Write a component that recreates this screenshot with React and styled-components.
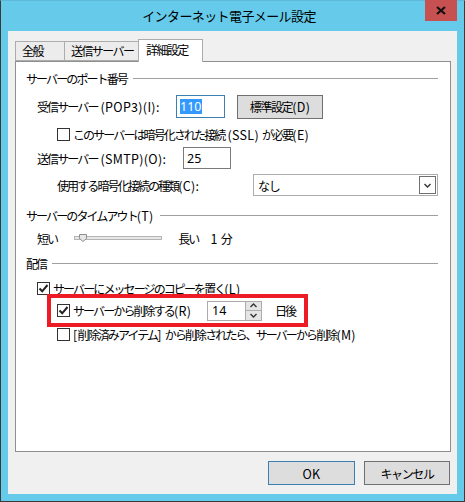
import React from "react";
import styled, { createGlobalStyle } from "styled-components";

const GlobalStyle = createGlobalStyle`
  html, body {
    margin: 0;
    padding: 0;
  }
  body {
    font-family: "Noto Sans CJK JP", "Noto Sans", sans-serif;
    font-size: 12px;
    color: #000;
  }
  * {
    box-sizing: border-box;
  }
`;

const Window = styled.div`
  width: 465px;
  height: 502px;
  border: 1px solid #3a3a3a;
  border-top-color: #5fb8d6;
  background: #66cbea;
  padding: 0 7px 7px 7px;
  display: flex;
  flex-direction: column;
`;

const TitleBar = styled.div`
  height: 30px;
  display: grid;
  grid-template-columns: 1fr auto 1fr;
  margin: 0 -7px 0 -7px;
  padding-right: 7px;
`;

const Title = styled.div`
  grid-column: 2;
  font-size: 13px;
  letter-spacing: -0.6px;
  line-height: 30px;
`;

const CloseButton = styled.div`
  grid-column: 3;
  justify-self: end;
  width: 32px;
  height: 21px;
  background: #c75050;
  display: flex;
  align-items: center;
  justify-content: center;
  margin-top: -1px;
`;

const Client = styled.div`
  flex: 1;
  background: #f0f0f0;
  padding: 8px 6px 9px 7px;
  display: flex;
  flex-direction: column;
`;

const TabRow = styled.div`
  display: flex;
  align-items: flex-end;
  height: 22px;
  position: relative;
  z-index: 1;
`;

const Tab = styled.div`
  height: ${(p) => (p.$active ? "23px" : "20px")};
  padding-left: ${(p) => (p.$active ? "7px" : "6px")};
  margin-bottom: ${(p) => (p.$active ? "-1px" : "0")};
  margin-left: -1px;
  border: 1px solid #acacac;
  border-bottom: ${(p) => (p.$active ? "none" : "1px solid #acacac")};
  background: ${(p) => (p.$active ? "#fff" : "#ececec")};
  letter-spacing: -1.6px;
  line-height: ${(p) => (p.$active ? "20px" : "18px")};
  white-space: nowrap;
  width: ${(p) => p.$w}px;
  &:first-child {
    margin-left: 0;
  }
`;

const Panel = styled.div`
  flex: 1;
  background: #fff;
  border: 1px solid #8e8f8f;
  padding: 8px 12px 0 10px;
  display: flex;
  flex-direction: column;
`;

const GroupHead = styled.div`
  display: flex;
  align-items: center;
  height: 16px;
  margin-top: ${(p) => p.$mt || 0}px;
  letter-spacing: -1.9px;
  white-space: nowrap;
  &::after {
    content: "";
    flex: 1;
    height: 1px;
    background: #a0a0a0;
    margin-left: 6px;
  }
`;

const Row = styled.div`
  display: flex;
  align-items: center;
  height: ${(p) => p.$h || 13}px;
  margin-top: ${(p) => p.$mt || 0}px;
  padding-left: ${(p) => p.$indent || 0}px;
  white-space: nowrap;
`;

const Label = styled.span`
  letter-spacing: -1.9px;
  width: ${(p) => (p.$w ? p.$w + "px" : "auto")};
  margin-left: ${(p) => p.$ml || 0}px;
  flex-shrink: 0;
`;

const Lt = styled.span`
  font-size: 12.5px;
  letter-spacing: 0.3px;
`;

const TextBox = styled.div`
  width: ${(p) => p.$w}px;
  height: ${(p) => p.$h || 23}px;
  border: 1px solid ${(p) => (p.$focus ? "#3c7fb1" : "#7a7a7a")};
  background: #fff;
  display: flex;
  align-items: center;
  padding-left: 3px;
  font-family: "Noto Sans", sans-serif;
  font-size: 12.5px;
`;

const Selected = styled.span`
  background: #3399ff;
  color: #fff;
  line-height: 15px;
  padding-right: 1px;
`;

const PushButton = styled.div`
  width: ${(p) => p.$w}px;
  height: ${(p) => p.$h || 24}px;
  background: #dddddd;
  border: 1px solid ${(p) => (p.$default ? "#3c7fb1" : "#707070")};
  display: flex;
  align-items: center;
  justify-content: center;
  letter-spacing: -1.4px;
  margin-left: ${(p) => p.$ml || 0}px;
  white-space: nowrap;
`;

const Select = styled.div`
  width: 185px;
  height: 22px;
  border: 1px solid #acacac;
  background: #fff;
  display: flex;
  align-items: center;
  justify-content: space-between;
  padding: 0 1px 0 4px;
  letter-spacing: -1.2px;
`;

const DropBtn = styled.div`
  width: 17px;
  height: 18px;
  border: 1px solid #707070;
  display: flex;
  align-items: center;
  justify-content: center;
`;

const Check = styled.div`
  width: 13px;
  height: 13px;
  border: 1px solid #333;
  background: #fff;
  flex-shrink: 0;
  display: flex;
  align-items: center;
  justify-content: center;
  margin-right: 3px;
`;

const Track = styled.div`
  width: 88px;
  height: 4px;
  border: 1px solid #b5b5b5;
  background: #e7e7e7;
  margin: 0 16px 0 17px;
  position: relative;
`;

const Thumb = styled.svg`
  position: absolute;
  left: 4px;
  top: -3px;
`;

const Highlight = styled.div`
  width: 261px;
  height: 33px;
  border: 4px solid #ed1c24;
  margin: -1px 0 0 21px;
  padding-left: 6px;
  display: flex;
  align-items: center;
  white-space: nowrap;
`;

const Spin = styled.div`
  display: flex;
  margin-left: 17px;
  margin-right: 13px;
`;

const SpinField = styled.div`
  width: 38px;
  height: 20px;
  border: 1px solid #acacac;
  border-right: none;
  display: flex;
  align-items: center;
  padding-left: 4px;
  font-family: "Noto Sans", sans-serif;
  font-size: 12.5px;
`;

const SpinButtons = styled.div`
  width: 17px;
  height: 20px;
  border: 1px solid #acacac;
  display: flex;
  flex-direction: column;
`;

const SpinHalf = styled.div`
  flex: 1;
  background: #e5e5e5;
  display: flex;
  align-items: center;
  justify-content: center;
  & + & {
    border-top: 1px solid #acacac;
  }
`;

const Footer = styled.div`
  display: flex;
  justify-content: flex-end;
  padding-top: 9px;
  padding-right: 1px;
`;

const CheckMark = () => (
  <svg width="11" height="11" viewBox="0 0 11 11">
    <path d="M1.5 5.5 L4.2 8.3 L9.5 2" fill="none" stroke="#222" strokeWidth="2" />
  </svg>
);

const CheckBox = ({ checked }) => <Check>{checked && <CheckMark />}</Check>;

const Chevron = ({ up }) => (
  <svg width="7" height="5" viewBox="0 0 7 5">
    <path
      d={up ? "M0.5 4 L3.5 1 L6.5 4" : "M0.5 1 L3.5 4 L6.5 1"}
      fill="none"
      stroke="#333"
      strokeWidth="1.4"
    />
  </svg>
);

export default function App() {
  return (
    <>
      <GlobalStyle />
      <Window>
        <TitleBar>
          <Title>インターネット電子メール設定</Title>
          <CloseButton>
            <svg width="10" height="9" viewBox="0 0 10 9">
              <path d="M1 1 L9 8 M9 1 L1 8" stroke="#111" strokeWidth="2.2" />
            </svg>
          </CloseButton>
        </TitleBar>
        <Client>
          <TabRow>
            <Tab $w={50}>全般</Tab>
            <Tab $w={75}>送信サーバー</Tab>
            <Tab $active $w={65}>詳細設定</Tab>
          </TabRow>
          <Panel>
            <GroupHead>サーバーのポート番号</GroupHead>
            <Row $h={23} $mt={9} $indent={11}>
              <Label $w={139}>
                受信サーバー<Lt> (POP3)(I):</Lt>
              </Label>
              <TextBox $w={49} $focus>
                <Selected>110</Selected>
              </TextBox>
              <PushButton $w={86} $h={24} $ml={12}>
                標準設定<Lt>(D)</Lt>
              </PushButton>
            </Row>
            <Row $mt={10} $indent={31}>
              <CheckBox />
              <Label>
                このサーバーは暗号化された接続<Lt> (SSL) </Lt>が必要<Lt>(E)</Lt>
              </Label>
            </Row>
            <Row $h={22} $mt={6} $indent={11}>
              <Label $w={146}>
                送信サーバー<Lt> (SMTP)(O):</Lt>
              </Label>
              <TextBox $w={48} $h={22}>25</TextBox>
            </Row>
            <Row $h={22} $mt={5} $indent={31}>
              <Label $w={196}>
                使用する暗号化接続の種類<Lt>(C):</Lt>
              </Label>
              <Select>
                <span>なし</span>
                <DropBtn>
                  <Chevron />
                </DropBtn>
              </Select>
            </Row>
            <GroupHead $mt={11}>
              サーバーのタイムアウト<Lt>(T)</Lt>
            </GroupHead>
            <Row $h={20} $mt={5} $indent={11}>
              <Label>短い</Label>
              <Track>
                <Thumb width="8" height="8" viewBox="0 0 8 8">
                  <path d="M0.5 0.5 H7.5 V4.5 L4 7.5 L0.5 4.5 Z" fill="#e6e6e6" stroke="#8f8f8f" />
                </Thumb>
              </Track>
              <Label>長い</Label>
              <Label $ml={12}>
                <Lt>1 </Lt>分
              </Label>
            </Row>
            <GroupHead $mt={7}>配信</GroupHead>
            <Row $mt={11} $indent={11}>
              <CheckBox checked />
              <Label>
                サーバーにメッセージのコピーを置く<Lt>(L)</Lt>
              </Label>
            </Row>
            <Highlight>
              <CheckBox checked />
              <Label $w={117}>
                サーバーから削除する<Lt>(R)</Lt>
              </Label>
              <Spin>
                <SpinField>14</SpinField>
                <SpinButtons>
                  <SpinHalf>
                    <Chevron up />
                  </SpinHalf>
                  <SpinHalf>
                    <Chevron />
                  </SpinHalf>
                </SpinButtons>
              </Spin>
              <Label>日後</Label>
            </Highlight>
            <Row $mt={1} $indent={31}>
              <CheckBox />
              <Label>
                <Lt>[</Lt>削除済みアイテム<Lt>] </Lt>から削除されたら、サーバーから削除<Lt>(M)</Lt>
              </Label>
            </Row>
          </Panel>
          <Footer>
            <PushButton $w={87} $default>
              <Lt>OK</Lt>
            </PushButton>
            <PushButton $w={86} $ml={9}>キャンセル</PushButton>
          </Footer>
        </Client>
      </Window>
    </>
  );
}
